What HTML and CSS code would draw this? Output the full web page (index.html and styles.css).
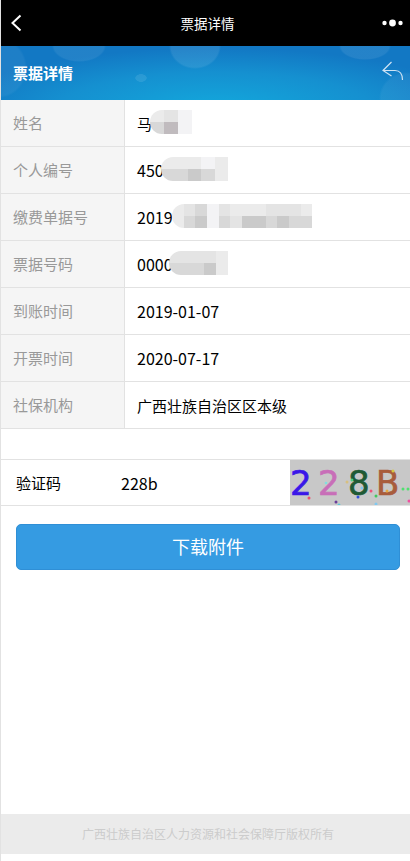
FILE: index.html
```html
<!DOCTYPE html>
<html lang="zh-CN">
<head>
<meta charset="utf-8">
<title>票据详情</title>
<link rel="stylesheet" href="styles.css">
</head>
<body>
<div class="page">
  <div class="topbar">
    <svg class="top-back" width="12" height="18" viewBox="0 0 12 18"><path d="M10.5 1.5 L2.5 9 L10.5 16.5" fill="none" stroke="#fff" stroke-width="2"/></svg>
    <span class="top-title">票据详情</span>
    <svg class="top-more" width="24" height="10" viewBox="0 0 24 10"><circle cx="3.5" cy="5" r="2.2" fill="#fff"/><circle cx="11.5" cy="5" r="3.4" fill="#fff"/><circle cx="19.5" cy="5" r="2.2" fill="#fff"/></svg>
  </div>
  <div class="header">
    <span class="header-title">票据详情</span>
    <svg class="header-back" width="22" height="20" viewBox="0 0 22 20"><path d="M9.5 1 L1 9.5 L9.5 15 M1 9.5 H13 C18 9.5 20.5 13 20.5 19" fill="none" stroke="#cfe3f4" stroke-width="1.2"/></svg>
  </div>
  <div class="table">
    <div class="row"><div class="label">姓名</div><div class="value"><span class="cjk">马</span>
      <div class="mask mask-name">
        <i class="c1"></i><i class="c2"></i><i class="c0"></i>
        <i class="c3"></i><i class="c5"></i><i class="c0"></i>
      </div></div></div>
    <div class="row"><div class="label">个人编号</div><div class="value"><span class="num">450</span>
      <div class="mask mask-id">
        <i class="c1"></i><i class="c1"></i><i class="c1"></i><i class="c0"></i><i class="c1"></i>
        <i class="c3"></i><i class="c3"></i><i class="c4"></i><i class="c3"></i><i class="c1"></i>
      </div></div></div>
    <div class="row"><div class="label">缴费单据号</div><div class="value"><span class="num">2019</span>
      <div class="mask mask-bill">
        <i class="c1"></i><i class="c2"></i><i class="c3"></i><i class="c0"></i><i class="c2"></i><i class="c1"></i><i class="c1"></i><i class="c1"></i><i class="c2"></i><i class="c2"></i><i class="c2"></i><i class="c1"></i>
        <i class="c1"></i><i class="c3"></i><i class="c4"></i><i class="c0"></i><i class="c3"></i><i class="c2"></i><i class="c4"></i><i class="c4"></i><i class="c3"></i><i class="c4"></i><i class="c3"></i><i class="c3"></i>
      </div></div></div>
    <div class="row"><div class="label">票据号码</div><div class="value"><span class="num">0000</span>
      <div class="mask mask-no">
        <i class="c2"></i><i class="c2"></i><i class="c2"></i><i class="c2"></i><i class="c1"></i>
        <i class="c3"></i><i class="c3"></i><i class="c3"></i><i class="c4"></i><i class="c1"></i>
      </div></div></div>
    <div class="row"><div class="label">到账时间</div><div class="value"><span class="num">2019-01-07</span></div></div>
    <div class="row"><div class="label">开票时间</div><div class="value"><span class="num">2020-07-17</span></div></div>
    <div class="row"><div class="label">社保机构</div><div class="value"><span class="cjk">广西壮族自治区区本级</span></div></div>
  </div>
  <div class="captcha">
    <span class="captcha-label">验证码</span>
    <span class="captcha-value">228b</span>
    <svg class="captcha-img" width="120" height="45" viewBox="0 0 120 45">
      <rect width="120" height="45" fill="#c8c8c8"/>
      <text class="cap-char" x="0" y="35" fill="#3a17e8" stroke="#3a17e8">2</text>
      <text class="cap-char" x="28" y="35" fill="#c86eb8" stroke="#c86eb8">2</text>
      <text class="cap-char" x="58" y="35" fill="#1f5a34" stroke="#1f5a34">8</text>
      <text class="cap-char" x="86" y="35" fill="#a85c3c" stroke="#a85c3c">B</text>
      <g>
        <circle cx="19" cy="38" r="1.5" fill="#f0506e"/><circle cx="46" cy="42" r="1.5" fill="#6a3d9a"/>
        <circle cx="49" cy="45" r="1.5" fill="#5cc8d8"/><circle cx="36" cy="23" r="1.3" fill="#7fe0e0"/>
        <circle cx="57" cy="22" r="1.5" fill="#d8c080"/><circle cx="62" cy="20" r="1.5" fill="#50d080"/>
        <circle cx="68" cy="37" r="1.5" fill="#3050d8"/><circle cx="81" cy="31" r="1.5" fill="#f0507a"/>
        <circle cx="86" cy="36" r="1.5" fill="#40c860"/><circle cx="97" cy="31" r="1.5" fill="#e8a840"/>
        <circle cx="103" cy="11" r="1.5" fill="#d8c840"/><circle cx="113" cy="29" r="1.5" fill="#50e070"/>
        <circle cx="118" cy="29" r="1.5" fill="#50e070"/><circle cx="119" cy="41" r="1.5" fill="#f050a0"/>
        <circle cx="86" cy="44" r="1.5" fill="#80c8f0"/><circle cx="72" cy="28" r="1.5" fill="#80c8f0"/>
      </g>
    </svg>
  </div>
  <div class="actions"><button class="download" type="button">下载附件</button></div>
  <div class="footer">广西壮族自治区人力资源和社会保障厅版权所有</div>
</div>
</body>
</html>
```
FILE: styles.css
```css
* { box-sizing: border-box; }
html, body { margin: 0; padding: 0; height: 100%; background: #fff; }
body { font-family: "Noto Sans CJK SC", "Noto Sans", sans-serif; overflow: hidden; }
.page { height: 861px; display: flex; flex-direction: column; border-left: 1px solid #e2e2e2; position: relative; }
.topbar { height: 46px; background: #000; color: #fff; display: flex; align-items: center; justify-content: space-between; padding: 0 5px 0 9px; position: relative; flex: none; }
.top-title { position: absolute; left: 0; right: 0; padding-left: 4px; text-align: center; font-size: 13.5px; line-height: 46px; }
.top-back, .top-more { position: relative; }
.header { height: 54px; flex: none; display: flex; align-items: center; justify-content: space-between; padding: 0 6px 0 12px; overflow: hidden;
  background:
    radial-gradient(ellipse 26px 23px at 194px 0px, rgba(255,255,255,.09) 92%, transparent 100%),
    radial-gradient(ellipse 27px 16px at 78px 0px, rgba(255,255,255,.07) 92%, transparent 100%),
    radial-gradient(ellipse 26px 14px at 364px 0px, rgba(255,255,255,.08) 92%, transparent 100%),
    radial-gradient(ellipse 28px 30px at -2px 22px, rgba(255,255,255,.05) 92%, transparent 100%),
    radial-gradient(ellipse 6px 4px at 140px 32px, rgba(255,255,255,.09) 90%, transparent 100%),
    radial-gradient(ellipse 28px 26px at 406px 52px, rgba(255,255,255,.05) 92%, transparent 100%),
    radial-gradient(ellipse 260px 60px at 215px 62px, #13a8dc 0%, #1590d0 60%, #1278c4 100%);
}
.header-title { color: #fff; font-size: 15px; font-weight: 700; margin-top: -2px; }
.header-back { display: block; margin-top: -5px; }
.table { flex: none; }
.row { display: flex; height: 47px; border-bottom: 1px solid #e2e2e2; }
.label { width: 124px; flex: none; background: #f5f5f5; border-right: 1px solid #e2e2e2; color: #999; font-size: 15px; line-height: 46px; padding-left: 12px; }
.value { flex: 1; position: relative; line-height: 46px; padding-left: 12px; color: #000; }
.cjk { font-size: 15px; }
.num { font-size: 16px; }
.mask { position: absolute; display: grid; grid-template-rows: 12px 12px; overflow: hidden; border-radius: 12px 0 0 12px; }
.mask i { display: block; }
.mask-name { left: 25px; top: 10px; grid-template-columns: repeat(3, 14px); }
.mask-id { left: 36px; top: 10px; grid-template-columns: repeat(5, 13.4px); }
.mask-bill { left: 47px; top: 10px; grid-template-columns: repeat(12, 11.7px); }
.mask-no { left: 44px; top: 10px; grid-template-columns: repeat(5, 11.8px); }
.c0 { background: #f3f3f5; }
.c1 { background: #ebebeb; }
.c2 { background: #e4e4e4; }
.c3 { background: #d8d8d8; }
.c4 { background: #cacaca; }
.c5 { background: #c0bbbe; }
.captcha { flex: none; margin-top: 30px; height: 47px; border-top: 1px solid #e2e2e2; border-bottom: 1px solid #e2e2e2; display: flex; align-items: center; padding-left: 15px; position: relative; font-size: 15px; color: #000; }
.captcha-label { width: 105px; flex: none; }
.captcha-value { font-size: 16px; flex: 1; }
.captcha-img { display: block; flex: none; }
.cap-char { font-family: "DejaVu Sans", sans-serif; font-size: 34px; stroke-width: .7px; }
.actions { flex: none; padding: 18px 10px 0 15px; }
.download { display: block; width: 100%; height: 46px; border: 1px solid #2f8fd6; border-radius: 5px; background: #359be2; color: #fff; font-family: inherit; font-size: 18px; padding: 0 0 2px; }
.footer { position: absolute; left: 0; right: 0; top: 814px; height: 40px; background: #ebebeb; color: #ccc; font-size: 12px; line-height: 40px; text-align: center; padding-left: 5px; }
```
